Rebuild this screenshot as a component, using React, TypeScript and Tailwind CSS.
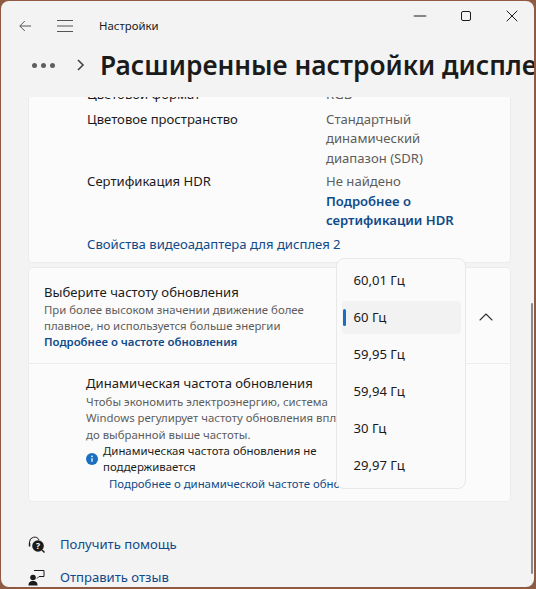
import { ChevronUp, Minus, X } from "lucide-react";

const font = { fontFamily: '"Noto Sans", sans-serif' };

const rates = ["60,01 Гц", "60 Гц", "59,95 Гц", "59,94 Гц", "30 Гц", "29,97 Гц"];

function Row({ label, children }: { label: string; children: React.ReactNode }) {
  return (
    <div className="flex">
      <div className="w-[239px] shrink-0 text-[#1b1b1b]">{label}</div>
      <div className="w-[150px] text-[#5d5d5d]">{children}</div>
    </div>
  );
}

export default function App() {
  return (
    <div style={font} className="h-[589px] w-[536px] overflow-hidden bg-[#8f5a42] pb-[2px] pl-px pr-[2px] pt-px text-[13.1px] leading-[19.5px]">
      <div className="relative flex h-full flex-col overflow-hidden rounded-lg bg-[#f3f3f3]">
        {/* titlebar */}
        <div className="flex h-[50px] shrink-0 items-center text-[#1b1b1b]">
          <svg className="ml-[18px] h-[12px] w-[12px]" viewBox="0 0 12 12" fill="none" stroke="#555" strokeWidth="1">
            <path d="M12 6H.8M5.800 1 .8 6l5 5" />
          </svg>
          <svg className="ml-[26px] h-[16px] w-[16px]" viewBox="0 0 16 16" fill="none" stroke="#555" strokeWidth="1">
            <path d="M0 2.500h16M0 8h16M0 13.500h16" />
          </svg>
          <span className="ml-[26px] text-[11.4px]">Настройки</span>
          <div className="-mr-[1px] mb-[20px] ml-auto flex items-center">
            <div className="flex w-[46px] justify-center">
              <Minus size={20} strokeWidth={1.2} />
            </div>
            <div className="flex w-[46px] justify-center">
              <div className="h-[10px] w-[10px] rounded-[2px] border border-[#1b1b1b]" />
            </div>
            <div className="flex w-[46px] justify-center">
              <X size={20} strokeWidth={1.2} />
            </div>
          </div>
        </div>
        {/* breadcrumb */}
        <div className="flex h-[46px] shrink-0 items-center whitespace-nowrap pb-[18px]">
          <div className="ml-[31px] flex shrink-0 gap-[4px]">
            <div className="h-[5px] w-[5px] rounded-full bg-[#5f5f5f]" />
            <div className="h-[5px] w-[5px] rounded-full bg-[#5f5f5f]" />
            <div className="h-[5px] w-[5px] rounded-full bg-[#5f5f5f]" />
          </div>
          <svg className="ml-[21px] h-[14px] w-[10px] shrink-0" viewBox="0 0 10 14" fill="none" stroke="#444" strokeWidth="1.6">
            <path d="M2 2l5 5-5 5" />
          </svg>
          <h1 className="ml-[14px] text-[26.3px] font-semibold leading-[36px] text-[#1b1b1b]">Расширенные настройки дисплея</h1>
        </div>
        {/* scrolling content */}
        <div className="relative min-h-0 flex-1 overflow-hidden pl-[27px] pr-[23px]">
          <div className="-mt-[13px] rounded-b-[4px] border border-[#ececec] bg-[#fbfbfb] pb-[8px] pl-[58px]">
            <Row label="Цветовой формат">RGB</Row>
            <div className="mt-[5px]">
              <Row label="Цветовое пространство">
                Стандартный динамический диапазон (SDR)
              </Row>
            </div>
            <div className="mt-[4px]">
              <Row label="Сертификация HDR">
                Не найдено
                <div className="font-semibold text-[#0f4a8a]">Подробнее о сертификации HDR</div>
              </Row>
            </div>
            <div className="mt-[4px] text-[#0f4a8a]">Свойства видеоадаптера для дисплея 2</div>
          </div>

          <div className="mt-[4px] h-[235px] overflow-hidden rounded-[4px] border border-[#ececec] bg-[#fbfbfb]">
            <div className="flex h-[96px] items-center border-b border-[#ececec] pl-[15px] pt-[2px]">
              <div>
                <div className="text-[#1b1b1b]">Выберите частоту обновления</div>
                <div className="w-[280px] text-[11.4px] leading-[16px] text-[#5d5d5d]">
                  При более высоком значении движение более плавное, но используется больше энергии
                </div>
                <div className="text-[11.4px] font-semibold leading-[16px] text-[#0f4a8a]">Подробнее о частоте обновления</div>
              </div>
              <ChevronUp className="ml-auto mr-[12px] text-[#333]" size={24} strokeWidth={1.1} />
            </div>
            <div className="whitespace-nowrap pl-[57px] pt-[10px]">
              <div className="text-[#1b1b1b]">Динамическая частота обновления</div>
              <div className="text-[11.4px] leading-[16.5px] text-[#5d5d5d]">
                <div>Чтобы экономить электроэнергию, система</div>
                <div>Windows регулирует частоту обновления вплоть</div>
                <div>до выбранной выше частоты.</div>
              </div>
              <div className="flex items-center text-[11.4px] leading-[16px] text-[#1b1b1b]">
                <svg className="h-[12px] w-[12px] shrink-0" viewBox="0 0 12 12">
                  <circle cx="6" cy="6" r="6" fill="#1a6fc0" />
                  <path d="M6 5.200v3.600" stroke="#fff" strokeWidth="1.3" />
                  <circle cx="6" cy="3.400" r=".8" fill="#fff" />
                </svg>
                <div className="ml-[5px]">
                  <div>Динамическая частота обновления не</div>
                  <div>поддерживается</div>
                </div>
              </div>
              <div className="ml-[23px] text-[11.4px] leading-[18px] text-[#0f4a8a]">Подробнее о динамической частоте обновления</div>
            </div>
          </div>

          <div className="mt-[33px] flex flex-col gap-[13px] text-[#0f4a8a]">
            <div className="flex items-center gap-[15px]">
              <svg className="h-[17px] w-[17px] shrink-0" viewBox="0 0 17 17">
                <path d="M1.500 8V6a5 5 0 0 1 9.500-2" fill="none" stroke="#1b1b1b" strokeWidth="1" />
                <path d="M.8 7h1.500v3.500H.8z" fill="#1b1b1b" />
                <circle cx="10" cy="10" r="5.800" fill="#1b1b1b" />
                <path d="M14 14l2.500 2.500" stroke="#1b1b1b" strokeWidth="1.4" />
                <text x="10" y="13" textAnchor="middle" fontSize="8.500" fontWeight="700" fill="#fff">?</text>
              </svg>
              Получить помощь
            </div>
            <div className="flex items-center gap-[15px]">
              <svg className="h-[17px] w-[17px] shrink-0" viewBox="0 0 17 17">
                <circle cx="5" cy="8.500" r="2.800" fill="#1b1b1b" />
                <path d="M.5 16.500c0-3.500 1.800-4.500 4.500-4.500s4.500 1 4.500 4.500z" fill="#1b1b1b" />
                <path d="M6 1.500h10v6h-5l-2 2" fill="none" stroke="#1b1b1b" strokeWidth="1" />
              </svg>
              Отправить отзыв
            </div>
          </div>

          {/* scrollbar */}
          <div className="absolute bottom-[13px] right-[1px] top-[206px] w-[2px] rounded-full bg-[#8a8a8a]" />

          {/* flyout */}
          <div className="absolute left-[335px] top-[161px] flex h-[231px] w-[130px] flex-col rounded-[8px] border border-[#e8e8e8] bg-[#fafafa] px-[4.500px] py-[3px] text-[#1b1b1b]">
            {rates.map((r, i) => (
              <div key={r} className="relative flex h-[37px] shrink-0 items-center pl-[12px]">
                {i === 1 && <div className="absolute inset-x-0 inset-y-[2px] rounded-[4px] bg-[#f2f2f2]" />}
                {i === 1 && <div className="absolute left-[1px] top-[10px] h-[17px] w-[3px] rounded-full bg-[#1a6fc0]" />}
                <span className="relative">{r}</span>
              </div>
            ))}
          </div>
        </div>
      </div>
    </div>
  );
}
